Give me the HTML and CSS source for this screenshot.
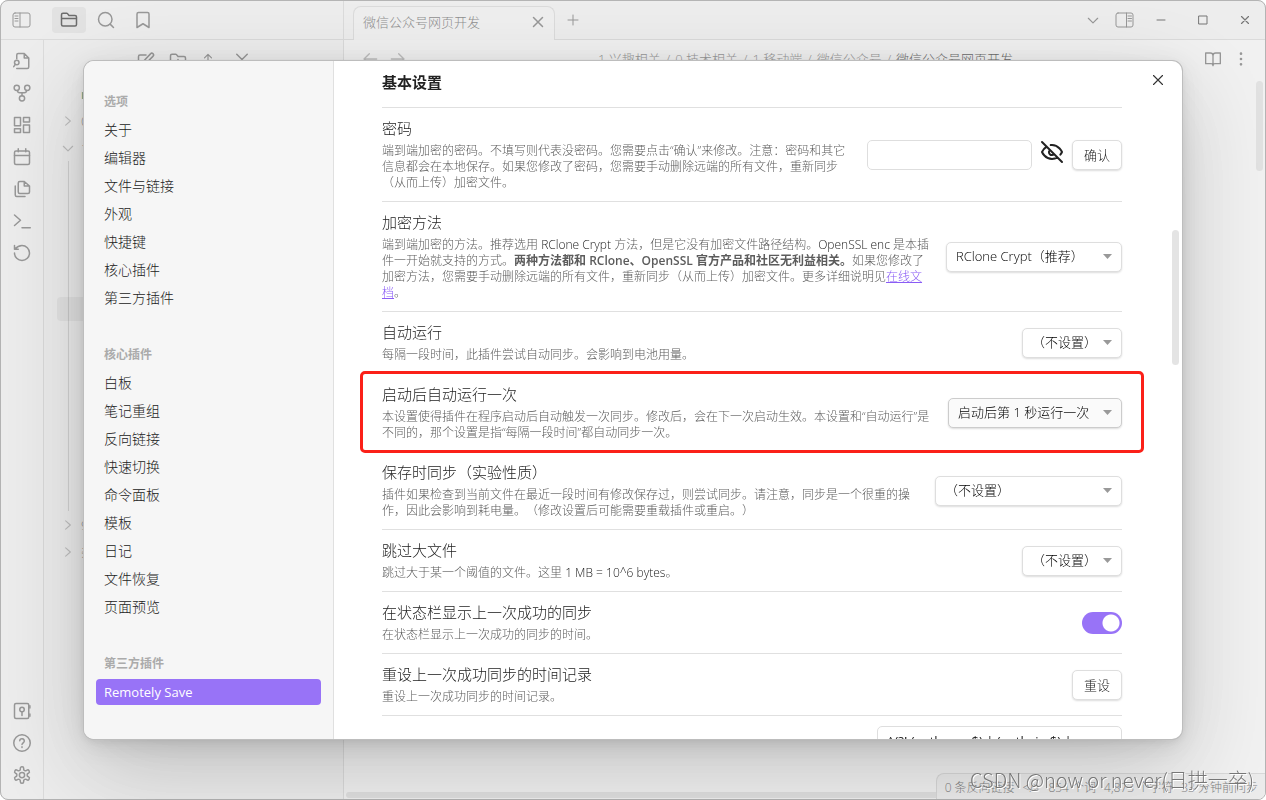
FILE: index.html
```html
<!DOCTYPE html>
<html lang="zh-CN">
<head>
<meta charset="utf-8">
<title>微信公众号网页开发 - Obsidian</title>
<link rel="stylesheet" href="styles.css">
</head>
<body>
<svg class="defs" aria-hidden="true">
  <defs>
    <symbol id="i-folder" viewBox="0 0 24 24"><path d="M4 20h16a2 2 0 0 0 2-2V8a2 2 0 0 0-2-2h-8l-2-2.500A1.500 1.500 0 0 0 8.900 3H4a2 2 0 0 0-2 2v13a2 2 0 0 0 2 2ZM2 10h20"/></symbol>
    <symbol id="i-new-folder" viewBox="0 0 24 24"><path d="M4 20h16a2 2 0 0 0 2-2V8a2 2 0 0 0-2-2h-8l-2-2.500A1.500 1.500 0 0 0 8.900 3H4a2 2 0 0 0-2 2v13a2 2 0 0 0 2 2ZM12 10v6M9 13h6"/></symbol>
    <symbol id="i-search" viewBox="0 0 24 24"><circle cx="11" cy="11" r="9"/><path d="m22 22-4.500-4.500"/></symbol>
    <symbol id="i-bookmark" viewBox="0 0 24 24"><path d="m20 22-8-5-8 5V4a2 2 0 0 1 2-2h12a2 2 0 0 1 2 2Z"/></symbol>
    <symbol id="i-x" viewBox="0 0 24 24"><path d="M18 6 6 18M6 6l12 12"/></symbol>
    <symbol id="i-plus" viewBox="0 0 24 24"><path d="M12 2v20M2 12h20"/></symbol>
    <symbol id="i-down" viewBox="0 0 24 24"><path d="m4 9 8 8 8-8"/></symbol>
    <symbol id="i-right" viewBox="0 0 24 24"><path d="m8 5 8 7-8 7"/></symbol>
    <symbol id="i-fold" viewBox="0 0 24 24"><path d="m5 3 7 7 7-7M5 21l7-7 7 7"/></symbol>
    <symbol id="i-min" viewBox="0 0 24 24"><path d="M4 12h16"/></symbol>
    <symbol id="i-max" viewBox="0 0 24 24"><path d="M4 4h16v16H4Z"/></symbol>
    <symbol id="i-left-panel" viewBox="0 0 20 16"><rect x="1" y="1" width="17" height="14" rx="2"/><path d="M8 1v14M3 4h3M3 6.500h3M3 9h3"/></symbol>
    <symbol id="i-right-panel" viewBox="0 0 20 16"><rect x="1" y="1" width="17" height="14" rx="2"/><path d="M11.500 1v14M13 4h3.500M13 6.500h3.500M13 9h3.500"/></symbol>
    <symbol id="i-switcher" viewBox="0 0 24 24"><path d="M5 9V4a2 2 0 0 1 2-2h8l6 6v12a2 2 0 0 1-2 2H5M15 2v6h6"/><circle cx="5" cy="14" r="3"/><path d="m3 16.500-2 3"/></symbol>
    <symbol id="i-graph" viewBox="0 0 24 24"><circle cx="12" cy="19" r="3.500"/><circle cx="5" cy="5" r="3.500"/><circle cx="19" cy="5" r="3.500"/><path d="M6 8.500c0 2 1 3 3 3h6c2 0 3-1 3-3M12 11.500v4"/></symbol>
    <symbol id="i-canvas" viewBox="0 0 24 24"><path d="M2 2h8v11H2ZM14 2h8v6h-8ZM14 12h8v10h-8ZM2 17h8v5H2Z"/></symbol>
    <symbol id="i-calendar" viewBox="0 0 24 24"><rect x="2" y="4" width="20" height="18" rx="2"/><path d="M2 10h20M7 1v4M17 1v4"/></symbol>
    <symbol id="i-files" viewBox="0 0 24 24"><path d="M15 2H9a2 2 0 0 0-2 2v12a2 2 0 0 0 2 2h11a2 2 0 0 0 2-2V8ZM15 2v6h7M3 8v12a2 2 0 0 0 2 2h11"/></symbol>
    <symbol id="i-terminal" viewBox="0 0 24 24"><path d="m2 4 8 7-8 7M12 21h11"/></symbol>
    <symbol id="i-reset" viewBox="0 0 24 24"><path d="M2 12A10 10 0 1 0 12 2C8 2 5 4 2 7M2 2v5h5"/></symbol>
    <symbol id="i-vault" viewBox="0 0 24 24"><rect x="2" y="2" width="19" height="20" rx="2"/><circle cx="12" cy="10" r="3"/><path d="M12 13v5M22.500 5v3M22.500 16v3"/></symbol>
    <symbol id="i-help" viewBox="0 0 24 24"><circle cx="12" cy="12" r="11"/><path d="M9 9a3 3 0 0 1 6 .5c0 2-3 2.500-3 4.500M12 17v1"/></symbol>
    <symbol id="i-gear" viewBox="0 0 24 24"><path d="M12.220 1h-.44a2 2 0 0 0-2 2v1.180a2 2 0 0 1-1 1.730l-.43.25a2 2 0 0 1-2 0l-.95-.58a2 2 0 0 0-2.730.73l-.22.38a2 2 0 0 0 .73 2.730l.95.6a2 2 0 0 1 1 1.720v.51a2 2 0 0 1-1 1.740l-.95.59a2 2 0 0 0-.73 2.730l.22.38a2 2 0 0 0 2.730.73l.95-.58a2 2 0 0 1 2 0l.43.25a2 2 0 0 1 1 1.730V21a2 2 0 0 0 2 2h.44a2 2 0 0 0 2-2v-1.180a2 2 0 0 1 1-1.730l.43-.25a2 2 0 0 1 2 0l.95.58a2 2 0 0 0 2.730-.73l.22-.39a2 2 0 0 0-.73-2.730l-.95-.58a2 2 0 0 1-1-1.740v-.5a2 2 0 0 1 1-1.740l.95-.59a2 2 0 0 0 .73-2.730l-.22-.38a2 2 0 0 0-2.730-.73l-.95.580a2 2 0 0 1-2 0l-.43-.25a2 2 0 0 1-1-1.730V3a2 2 0 0 0-2-2z"/><circle cx="12" cy="12" r="3.500"/></symbol>
    <symbol id="i-edit" viewBox="0 0 24 24"><path d="M12 4H4a2 2 0 0 0-2 2v14a2 2 0 0 0 2 2h14a2 2 0 0 0 2-2v-7M18 2.500a2.100 2.100 0 0 1 3.500 3L12 15l-4 1 1-4Z"/></symbol>
    <symbol id="i-up" viewBox="0 0 24 24"><path d="M12 21V4M6 10l6-6 6 6"/></symbol>
    <symbol id="i-back" viewBox="0 0 24 24"><path d="M22 12H3M11 4l-8 8 8 8"/></symbol>
    <symbol id="i-forward" viewBox="0 0 24 24"><path d="M2 12h19M13 4l8 8-8 8"/></symbol>
    <symbol id="i-book" viewBox="0 0 24 24"><path d="M1 3h7a4 4 0 0 1 4 4v15a3 3 0 0 0-3-3H1ZM23 3h-7a4 4 0 0 0-4 4v15a3 3 0 0 1 3-3h8Z"/></symbol>
    <symbol id="i-more" viewBox="0 0 24 24"><circle cx="12" cy="4" r="1"/><circle cx="12" cy="12" r="1"/><circle cx="12" cy="20" r="1"/></symbol>
    <symbol id="i-eye-off" viewBox="0 0 24 24"><path d="M9.880 9.880a3 3 0 1 0 4.240 4.240M10.730 5.080A10.430 10.430 0 0 1 12 5c7 0 10 7 10 7a13.160 13.160 0 0 1-1.670 2.680M6.610 6.610A13.526 13.526 0 0 0 2 12s3 7 10 7a9.740 9.740 0 0 0 5.390-1.610M2 2l20 20"/></symbol>
  </defs>
</svg>

<div class="app">
  <header class="titlebar">
    <div class="titlebar-left">
      <button class="icon-btn" aria-label="侧边栏"><svg class="icon panel"><use href="#i-left-panel"/></svg></button>
      <div class="side-tabs">
        <button class="icon-btn tab-icon active" aria-label="文件列表"><svg class="icon"><use href="#i-folder"/></svg></button>
        <button class="icon-btn tab-icon" aria-label="搜索"><svg class="icon"><use href="#i-search"/></svg></button>
        <button class="icon-btn tab-icon" aria-label="书签"><svg class="icon"><use href="#i-bookmark"/></svg></button>
      </div>
    </div>
    <div class="titlebar-main">
      <div class="tab"><span>微信公众号网页开发</span><button class="icon-btn" aria-label="关闭标签"><svg class="icon"><use href="#i-x"/></svg></button></div>
      <button class="icon-btn new-tab" aria-label="新标签"><svg class="icon tiny"><use href="#i-plus"/></svg></button>
      <div class="window-controls">
        <button class="icon-btn" aria-label="标签列表"><svg class="icon small"><use href="#i-down"/></svg></button>
        <button class="icon-btn" aria-label="右侧边栏"><svg class="icon panel"><use href="#i-right-panel"/></svg></button>
        <div class="win-group">
          <button class="icon-btn win" aria-label="最小化"><svg class="icon tiny"><use href="#i-min"/></svg></button>
          <button class="icon-btn win" aria-label="最大化"><svg class="icon tiny"><use href="#i-max"/></svg></button>
          <button class="icon-btn win" aria-label="关闭"><svg class="icon small"><use href="#i-x"/></svg></button>
        </div>
      </div>
    </div>
  </header>
  <div class="workspace">
    <nav class="ribbon">
      <button class="icon-btn" aria-label="快速切换"><svg class="icon"><use href="#i-switcher"/></svg></button>
      <button class="icon-btn" aria-label="关系图谱"><svg class="icon"><use href="#i-graph"/></svg></button>
      <button class="icon-btn" aria-label="白板"><svg class="icon"><use href="#i-canvas"/></svg></button>
      <button class="icon-btn" aria-label="日记"><svg class="icon"><use href="#i-calendar"/></svg></button>
      <button class="icon-btn" aria-label="模板"><svg class="icon"><use href="#i-files"/></svg></button>
      <button class="icon-btn" aria-label="命令面板"><svg class="icon"><use href="#i-terminal"/></svg></button>
      <button class="icon-btn" aria-label="同步"><svg class="icon"><use href="#i-reset"/></svg></button>
      <button class="icon-btn push" aria-label="打开其他库"><svg class="icon"><use href="#i-vault"/></svg></button>
      <button class="icon-btn" aria-label="帮助"><svg class="icon"><use href="#i-help"/></svg></button>
      <button class="icon-btn" aria-label="设置"><svg class="icon"><use href="#i-gear"/></svg></button>
    </nav>
    <aside class="explorer">
      <div class="explorer-tools">
        <svg class="icon"><use href="#i-edit"/></svg>
        <svg class="icon"><use href="#i-new-folder"/></svg>
        <svg class="icon small"><use href="#i-up"/></svg>
        <svg class="icon"><use href="#i-fold"/></svg>
      </div>
      <div class="tree">
        <div class="tree-row"><span class="chev"></span><b>notes</b></div>
        <div class="tree-row"><svg class="chev"><use href="#i-right"/></svg>0</div>
        <div class="tree-row"><svg class="chev"><use href="#i-down"/></svg>1</div>
        <div class="tree-branch"><div class="tree-selected"></div></div>
        <div class="tree-row"><svg class="chev"><use href="#i-right"/></svg>9</div>
        <div class="tree-row"><svg class="chev"><use href="#i-right"/></svg>杂项</div>
      </div>
    </aside>
    <main class="editor">
      <div class="view-header">
        <div class="view-nav"><svg class="icon"><use href="#i-back"/></svg><svg class="icon"><use href="#i-forward"/></svg></div>
        <div class="crumbs">1 兴趣相关<i>/</i>0 技术相关<i>/</i>1 移动端<i>/</i>微信公众号<i>/</i><b>微信公众号网页开发</b></div>
        <div class="view-actions"><svg class="icon"><use href="#i-book"/></svg><svg class="icon"><use href="#i-more"/></svg></div>
      </div>
      <div class="editor-body"><div class="scroll-thumb"></div></div>
      <div class="h-scroll"></div>
    </main>
  </div>
  <footer class="statusbar"><span>0 条反向链接</span><span>&lt;/&gt;</span><span>854 个词</span><span>4,873 个字符</span><span>33 分钟前同步</span></footer>
</div>

<div class="overlay">
  <section class="modal" role="dialog" aria-label="设置">
    <nav class="menu">
      <h2>选项</h2>
      <a href="#">关于</a><a href="#">编辑器</a><a href="#">文件与链接</a><a href="#">外观</a><a href="#">快捷键</a><a href="#">核心插件</a><a href="#">第三方插件</a>
      <h2>核心插件</h2>
      <a href="#">白板</a><a href="#">笔记重组</a><a href="#">反向链接</a><a href="#">快速切换</a><a href="#">命令面板</a><a href="#">模板</a><a href="#">日记</a><a href="#">文件恢复</a><a href="#">页面预览</a>
      <h2>第三方插件</h2>
      <a href="#" class="current">Remotely Save</a>
    </nav>
    <div class="content">
      <h1>基本设置</h1>
      <div class="item">
        <div class="info"><label class="name" for="pw">密码</label>
          <p>端到端加密的密码。不填写则代表没密码。您需要点击“确认”来修改。注意：密码和其它信息都会在本地保存。如果您修改了密码，您需要手动删除远端的所有文件，重新同步（从而上传）加密文件。</p></div>
        <div class="control"><input id="pw" class="field" type="password"><button class="eye" aria-label="显示密码"><svg class="icon"><use href="#i-eye-off"/></svg></button><button class="btn">确认</button></div>
      </div>
      <div class="item">
        <div class="info"><label class="name" for="enc">加密方法</label>
          <p>端到端加密的方法。推荐选用 <span class="latin">RClone Crypt</span> 方法，但是它没有加密文件路径结构。<span class="latin">OpenSSL enc</span> 是本插件一开始就支持的方式。<strong>两种方法都和 RClone、OpenSSL 官方产品和社区无利益相关。</strong>如果您修改了加密方法，您需要手动删除远端的所有文件，重新同步（从而上传）加密文件。更多详细说明见<a href="#">在线文档</a>。</p></div>
        <div class="control"><select id="enc" class="select w-m"><option>RClone Crypt（推荐）</option></select></div>
      </div>
      <div class="item">
        <div class="info"><label class="name" for="auto">自动运行</label>
          <p>每隔一段时间，此插件尝试自动同步。会影响到电池用量。</p></div>
        <div class="control"><select id="auto" class="select w-s"><option>（不设置）</option></select></div>
      </div>
      <div class="item marked">
        <div class="info"><label class="name" for="once">启动后自动运行一次</label>
          <p>本设置使得插件在程序启动后自动触发一次同步。修改后，会在下一次启动生效。本设置和“自动运行”是不同的，那个设置是指“每隔一段时间”都自动同步一次。</p></div>
        <div class="control"><select id="once" class="select w-n hover"><option>启动后第 1 秒运行一次</option></select></div>
      </div>
      <div class="item">
        <div class="info"><label class="name" for="save">保存时同步（实验性质）</label>
          <p>插件如果检查到当前文件在最近一段时间有修改保存过，则尝试同步。请注意，同步是一个很重的操作，因此会影响到耗电量。（修改设置后可能需要重载插件或重启。）</p></div>
        <div class="control"><select id="save" class="select w-l"><option>（不设置）</option></select></div>
      </div>
      <div class="item">
        <div class="info"><label class="name" for="big">跳过大文件</label>
          <p>跳过大于某一个阈值的文件。这里 <span class="latin">1 MB = 10^6 bytes</span>。</p></div>
        <div class="control"><select id="big" class="select w-s"><option>（不设置）</option></select></div>
      </div>
      <div class="item">
        <div class="info"><label class="name" for="status">在状态栏显示上一次成功的同步</label>
          <p>在状态栏显示上一次成功的同步的时间。</p></div>
        <div class="control"><input id="status" class="toggle" type="checkbox" checked></div>
      </div>
      <div class="item">
        <div class="info"><span class="name">重设上一次成功同步的时间记录</span>
          <p>重设上一次成功同步的时间记录。</p></div>
        <div class="control"><button class="btn">重设</button></div>
      </div>
      <div class="item">
        <div class="info"></div>
        <div class="control"><textarea class="area" rows="4" aria-label="路径规则">^(?! (path:own$) | (path:.in.$) |</textarea></div>
      </div>
    </div>
    <div class="modal-thumb"></div>
    <button class="icon-btn close" aria-label="关闭设置"><svg class="icon"><use href="#i-x"/></svg></button>
  </section>
</div>
<div class="watermark">CSDN @now or never(日拱一卒)</div>
</body>
</html>
```
FILE: styles.css
```css
* { box-sizing: border-box; }
body {
  margin: 0;
  height: 100vh;
  overflow: hidden;
  background: #fff;
  color: #222;
  font: 300 14px/20px "Open Sans", "Noto Sans CJK SC", sans-serif;
  text-spacing-trim: space-all;
}
button, input, select, textarea { font: inherit; color: inherit; }
.defs { position: absolute; width: 0; height: 0; }
.icon, .chev {
  width: 18px;
  height: 18px;
  flex: none;
  fill: none;
  stroke: currentColor;
  stroke-width: 2;
  stroke-linecap: round;
  stroke-linejoin: round;
}
.icon.panel { width: 20px; height: 16px; stroke-width: 1; }
.icon.small { width: 14px; height: 14px; }
.icon.tiny { width: 12px; height: 12px; }
.icon-btn {
  display: flex;
  align-items: center;
  justify-content: center;
  padding: 0;
  border: 0;
  background: none;
  color: #6b6b6b;
}

.app {
  display: flex;
  flex-direction: column;
  height: 100vh;
  border: 1px solid #999;
  border-radius: 8px;
  background: #f8f8f8;
  overflow: hidden;
}
.titlebar { display: flex; height: 39px; flex: none; }
.titlebar-left {
  display: flex;
  width: 343px;
  padding: 0 0 1px 11px;
  border-right: 1px solid #dadada;
  border-bottom: 1px solid #dadada;
}
.side-tabs { display: flex; align-items: center; gap: 3px; margin-left: 20px; }
.tab-icon { width: 34px; height: 26px; border-radius: 4px; }
.tab-icon.active { background: #e6e6e6; color: #222; }
.titlebar-main {
  display: flex;
  flex: 1;
  padding: 0 0 1px 9px;
  box-shadow: inset 0 -1px #dadada;
}
.tab {
  display: flex;
  align-items: center;
  justify-content: space-between;
  width: 202px;
  margin: 5px 0 -1px;
  padding: 0 7px 3px 9px;
  border: 1px solid #dadada;
  border-bottom: 0;
  border-radius: 8px 8px 0 0;
  background: #fbfbfb;
  color: #5a5a5a;
  font-size: 13px;
}
.new-tab { margin-left: 12px; }
.window-controls { display: flex; gap: 15px; margin-left: auto; padding-right: 13px; }
.win-group { display: flex; gap: 28px; margin-left: 4px; }
.win { width: 14px; color: #333; }

.workspace { display: flex; flex: 1; min-height: 0; }
.ribbon {
  display: flex;
  flex-direction: column;
  gap: 6px;
  width: 43px;
  padding: 8px 0 11px;
  border-right: 1px solid #dadada;
}
.ribbon .icon-btn { height: 26px; width: 42px; }
.push { margin-top: auto; }
.explorer { width: 300px; border-right: 1px solid #dadada; color: #5a5a5a; }
.explorer-tools { display: flex; gap: 14px; padding: 12px 0 0 93px; color: #6b6b6b; }
.explorer-tools .small { margin-right: 4px; }
.tree { padding: 10px 12px 0 13px; font-size: 13px; }
.tree-row { display: flex; align-items: center; gap: 6px; height: 27px; padding-left: 4px; }
.tree-row b { color: #0a7a5a; font-weight: 600; }
.chev { width: 14px; height: 14px; color: #ababab; }
.tree-branch { height: 350px; padding-top: 136px; background: linear-gradient(#ccc, #ccc) 11px 0/1px 100% no-repeat; }
.tree-selected { height: 24px; border-radius: 4px; background: rgba(0, 0, 0, .07); }
.editor { display: flex; flex-direction: column; flex: 1; min-width: 0; background: #fff; }
.view-header {
  display: flex;
  align-items: center;
  justify-content: space-between;
  height: 38px;
  padding: 0 16px 0 18px;
  color: #6b6b6b;
}
.view-nav, .view-actions { display: flex; gap: 12px; width: 60px; }
.view-nav { color: #aaa; }
.view-actions { justify-content: flex-end; }
.view-header .icon { width: 16px; height: 16px; }
.crumbs { font-size: 13px; }
.crumbs i { margin: 0 5px; font-style: normal; }
.crumbs b { font-weight: 300; color: #222; }
.editor-body { flex: 1; display: flex; justify-content: flex-end; padding: 3px 2px 0; }
.scroll-thumb { width: 7px; height: 90px; border-radius: 4px; background: #e4e4e4; }
.h-scroll { height: 6px; width: 68%; margin: 0 2px 1px; border-radius: 4px; background: #e2e2e2; }
.statusbar {
  position: absolute;
  right: 1px;
  bottom: 1px;
  display: flex;
  gap: 8px;
  height: 26px;
  padding: 4px 7px 2px 8px;
  border: 1px solid #d5d5d5;
  border-width: 1px 0 0 1px;
  border-radius: 8px 0 8px 0;
  background: #f6f6f6;
  color: #444;
  font-size: 12px;
}

.overlay {
  position: fixed;
  inset: 0;
  padding: 61px 84px;
  border-radius: 8px;
  overflow: hidden;
  background: rgba(220, 220, 220, .4);
}
.modal {
  position: relative;
  display: flex;
  height: 100%;
  border-radius: 10px;
  background: #fff;
  overflow: hidden;
  box-shadow: 0 0 0 1px #bdbdbd, 0 2px 7px rgba(0, 0, 0, .07), 0 6px 25px rgba(0, 0, 0, .11), 0 30px 90px rgba(0, 0, 0, .2);
}
.menu {
  width: 250px;
  flex: none;
  padding: 9px 12px;
  border-right: 1px solid #e0e0e0;
  background: #f6f6f6;
}
.menu h2 { margin: 0; padding: 22px 8px 5px; color: #ababab; font-size: 12px; font-weight: 600; }
.menu a + h2 { padding-top: 32px; }
.menu a {
  display: block;
  margin-bottom: 2px;
  padding: 3px 8px;
  border-radius: 4px;
  color: #222;
  text-decoration: none;
}
.menu .current { background: #9873f7; color: #fff; font-size: 13px; font-weight: 400; }
.content { flex: 1; min-width: 0; padding: 10px 60px 0 48px; overflow: hidden; }
.content h1 { margin: 0 0 14px; font-size: 15px; line-height: 22px; font-weight: 600; }
.item {
  display: flex;
  align-items: center;
  gap: 16px;
  padding: 10px 0;
  border-top: 1px solid #e0e0e0;
}
.info { flex: 1; min-width: 0; }
.name { display: block; font-size: 15px; }
.info p { margin: 5px 0 0; color: #5c5c5c; font-size: 12px; line-height: 16px; }
.info strong { font-weight: 600; }
.info a { color: #8a5cf5; }
.latin { color: #222; }
.marked {
  margin: 0 -20px;
  padding: 10px 20px;
  border-radius: 3px;
  outline: 3px solid #fb2018;
  outline-offset: -1px;
}
.control { display: flex; align-items: center; gap: 8px; flex: none; font-size: 13px; }
.field { width: 165px; height: 30px; border: 1px solid #dedede; border-radius: 5px; background: #fff; }
.eye { display: flex; padding: 0 0 5px; border: 0; background: none; }
.eye .icon { width: 24px; height: 24px; }
.btn, .select {
  height: 30px;
  border: 1px solid #dedede;
  border-radius: 5px;
  background: #fff;
  box-shadow: 0 1px 2px rgba(0, 0, 0, .14);
}
.btn { width: 50px; padding: 0; }
.select {
  appearance: none;
  padding: 0 24px 2px 9px;
  color: #000;
  background: #fff url("data:image/svg+xml,%3Csvg xmlns='http://www.w3.org/2000/svg' width='10' height='5'%3E%3Cpath d='M0 0h9L4.500 5z' fill='%23999'/%3E%3C/svg%3E") no-repeat right 8px center;
}
.select.hover { background-color: #fafafa; border-color: #ccc; }
.w-s { width: 100px; }
.w-n { width: 174px; }
.w-m { width: 176px; }
.w-l { width: 187px; }
.toggle {
  appearance: none;
  width: 40px;
  height: 22px;
  margin: 0;
  border-radius: 11px;
  background: radial-gradient(circle at 29px 11px, #fff 8px, transparent 9px) #9873f7;
}
.area {
  width: 245px;
  padding: 4px 9px;
  border: 1px solid #dedede;
  border-radius: 5px;
  resize: none;
  font-weight: 400;
}
.modal-thumb {
  position: absolute;
  top: 169px;
  right: 3px;
  width: 7px;
  height: 135px;
  border-radius: 4px;
  background: #e4e4e4;
}
.close { position: absolute; top: 10px; right: 15px; color: #333; }
.close .icon { stroke-width: 1.5; }
.watermark {
  position: fixed;
  right: 12px;
  bottom: 7px;
  color: #777;
  font-family: "Noto Sans CJK SC", sans-serif;
  font-size: 20px;
  line-height: 26px;
  text-shadow: 1px 1px #fff;
}
```
